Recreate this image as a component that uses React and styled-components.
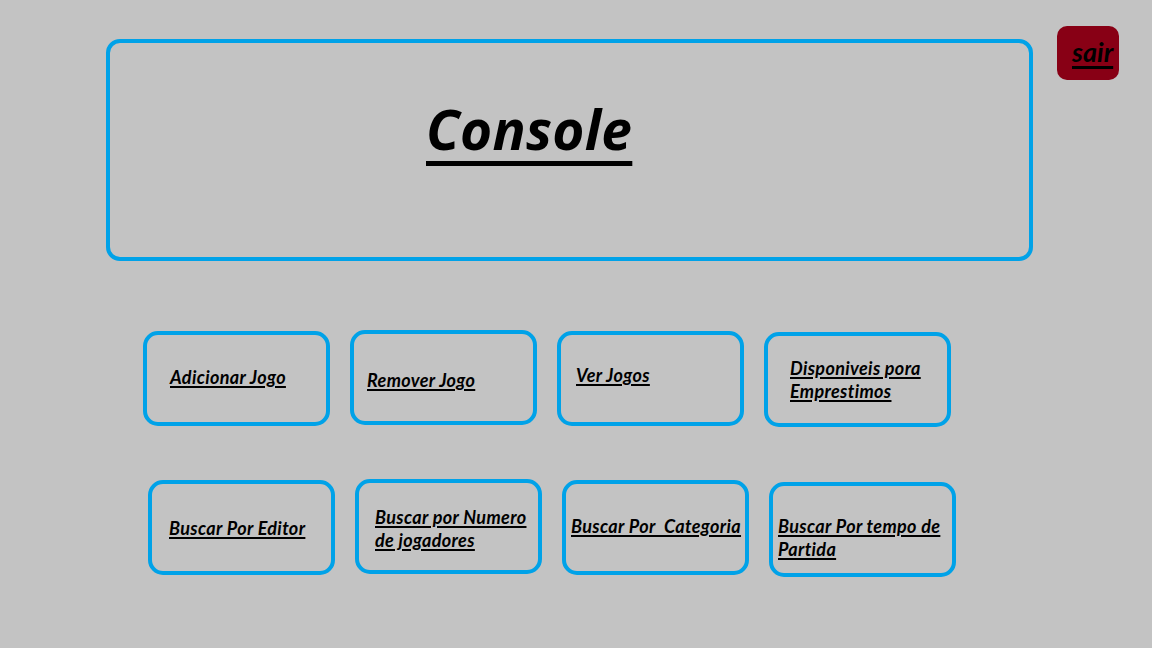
import React from "react";
import styled, { createGlobalStyle } from "styled-components";

const Global = createGlobalStyle`
  html, body { margin: 0; padding: 0; background: #c3c3c3; }
  body { font-family: Lato, "Open Sans", sans-serif; }
`;

const Page = styled.div`
  width: 1152px;
  height: 648px;
  box-sizing: border-box;
  background: #c3c3c3;
  padding: 26px 0 0 106px;
  display: flex;
  flex-direction: column;
`;

const Header = styled.div`
  display: flex;
  align-items: flex-start;
  gap: 24px;
`;

const TitleBox = styled.div`
  margin-top: 13px;
  width: 927px;
  height: 222px;
  box-sizing: border-box;
  border: 4px solid #00a2e8;
  border-radius: 14px;
  padding: 50px 0 0 316px;
`;

const Title = styled.h1`
  margin: 0;
  font-family: "Open Sans", sans-serif;
  font-style: italic;
  font-weight: 700;
  font-size: 55px;
  letter-spacing: 0.3px;
  line-height: 72px;
  color: #000;
  text-decoration: underline;
  text-decoration-thickness: 5px;
  text-underline-offset: 11px;
`;

const Sair = styled.button`
  width: 62px;
  height: 54px;
  box-sizing: border-box;
  border: none;
  border-radius: 10px;
  background: #880015;
  color: #000;
  font-family: Lato, sans-serif;
  font-style: italic;
  font-weight: 700;
  font-size: 27px;
  line-height: 34px;
  padding: 9px 0 0 15px;
  display: flex;
  align-items: flex-start;
  justify-content: flex-start;
  text-decoration: underline;
  text-decoration-thickness: 3px;
  text-underline-offset: 4px;
  cursor: pointer;
`;

const Row = styled.div`
  display: flex;
  gap: 20px;
  margin-left: ${(p) => p.$left}px;
  margin-top: ${(p) => p.$top}px;
`;

const Btn = styled.button`
  width: 187px;
  height: 95px;
  box-sizing: border-box;
  border: 4px solid #00a2e8;
  border-radius: 15px;
  background: transparent;
  margin: ${(p) => p.$dy}px 0 0 0;
  padding: ${(p) => p.$pt}px 0 0 ${(p) => p.$pl}px;
  display: flex;
  align-items: flex-start;
  justify-content: flex-start;
  text-align: left;
  cursor: pointer;
`;

const Label = styled.span`
  font-family: Lato, sans-serif;
  font-style: italic;
  font-weight: 700;
  font-size: 18px;
  letter-spacing: 0.35px;
  line-height: 23px;
  white-space: pre;
  color: #000;
  text-decoration: underline;
  text-decoration-thickness: 2px;
  text-underline-offset: 2px;
`;

const row1 = [
  { t: "Adicionar Jogo", pl: 23, pt: 31, dy: 1 },
  { t: "Remover Jogo", pl: 13, pt: 35, dy: 0 },
  { t: "Ver Jogos", pl: 15, pt: 29, dy: 1 },
  { t: "Disponiveis pora\nEmprestimos", pl: 22, pt: 21, dy: 2 },
];
const row2 = [
  { t: "Buscar Por Editor", pl: 17, pt: 33, dy: 1 },
  { t: "Buscar por Numero\nde jogadores", pl: 16, pt: 23, dy: 0 },
  { t: "Buscar Por  Categoria", pl: 5, pt: 31, dy: 1 },
  { t: "Buscar Por tempo de\nPartida", pl: 5, pt: 29, dy: 3 },
];

export default function App() {
  return (
    <>
      <Global />
      <Page>
        <Header>
          <TitleBox>
            <Title>Console</Title>
          </TitleBox>
          <Sair>sair</Sair>
        </Header>
        <Row $left={37} $top={69}>
          {row1.map((b) => (
            <Btn key={b.t} $pl={b.pl} $pt={b.pt} $dy={b.dy}>
              <Label>{b.t}</Label>
            </Btn>
          ))}
        </Row>
        <Row $left={42} $top={52}>
          {row2.map((b) => (
            <Btn key={b.t} $pl={b.pl} $pt={b.pt} $dy={b.dy}>
              <Label>{b.t}</Label>
            </Btn>
          ))}
        </Row>
      </Page>
    </>
  );
}
